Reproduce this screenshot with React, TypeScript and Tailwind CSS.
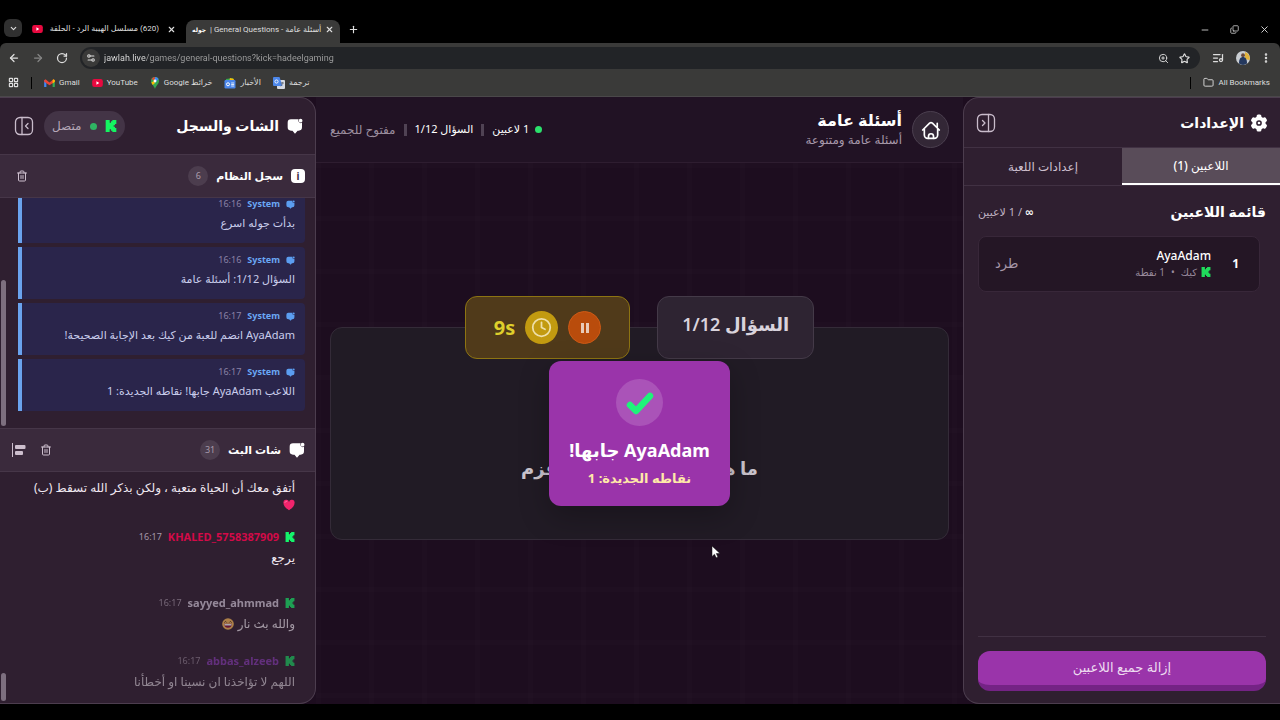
import type { ReactNode } from 'react';
import {
  ArrowLeft,
  ArrowRight,
  ChevronDown,
  Clock,
  Copy,
  EllipsisVertical,
  Folder,
  LayoutGrid,
  ListMusic,
  Minus,
  Plus,
  RotateCw,
  Settings2,
  Star,
  Trash2,
  X,
  ZoomIn,
} from 'lucide-react';

interface SystemMessage {
  time: string;
  text: string;
}

interface ChatMessage {
  user: string;
  time: string;
  color: string;
  className: string;
  body: ReactNode;
}

function KickLogo({ className }: { className?: string }) {
  return (
    <svg viewBox="1 0 22 24" fill="currentColor" className={className} aria-hidden="true">
      <path d="M1.333 0h8v5.333H12V2.667h2.667V0h8v8H20v2.667h-2.667v2.666H20V16h2.667v8h-8v-2.667H12v-2.666H9.333V24h-8Z" />
    </svg>
  );
}

function ChatIcon({ className }: { className?: string }) {
  return (
    <svg viewBox="0 0 24 24" fill="currentColor" className={className} aria-hidden="true">
      <path d="M6 2h11.400a3.800 3.800 0 0 0 5.100 5.200V14a5 5 0 0 1-5 5h-1.600L12 23.500 8.200 19H6a5 5 0 0 1-5-5V7a5 5 0 0 1 5-5Z" />
      <circle cx="20.400" cy="4" r="2.800" />
    </svg>
  );
}

function PanelIcon({ side }: { side: 'left' | 'right' }) {
  return (
    <svg
      viewBox="0 0 20 20"
      fill="none"
      stroke="currentColor"
      strokeWidth="1.3"
      strokeLinecap="round"
      strokeLinejoin="round"
      className="size-5"
      aria-hidden="true"
    >
      <rect x="1.5" y="1.5" width="17" height="17" rx="4.5" />
      {side === 'left' ? <path d="M8 1.5v17M14 7.5 11.5 10l2.5 2.5" /> : <path d="M12.5 1.5v17M6.5 7.5 9 10l-2.5 2.5" />}
    </svg>
  );
}

function GearIcon({ className }: { className?: string }) {
  return (
    <svg viewBox="0 0 24 24" className={className} aria-hidden="true">
      <g fill="currentColor">
        <circle cx="12" cy="12" r="8.8" />
        <rect x="8.8" y="0.800" width="6.4" height="22.400" rx="2" />
        <rect x="8.8" y="0.800" width="6.4" height="22.400" rx="2" transform="rotate(60 12 12)" />
        <rect x="8.8" y="0.800" width="6.4" height="22.400" rx="2" transform="rotate(120 12 12)" />
      </g>
      <circle cx="12" cy="12" r="2.800" fill="none" stroke="#2f1f30" strokeWidth="2" />
    </svg>
  );
}

function HomeIcon() {
  return (
    <svg
      viewBox="0 0 24 24"
      fill="none"
      stroke="currentColor"
      strokeWidth="2"
      strokeLinecap="round"
      strokeLinejoin="round"
      className="size-5"
      aria-hidden="true"
    >
      <path d="m2 12 8.3-8.2a2.5 2.5 0 0 1 3.4 0L22 12M4 10.5V18a4 4 0 0 0 4 4h8a4 4 0 0 0 4-4v-7.500M19.500 8.500V4" />
      <path d="M9 22v-2.500a3 3 0 0 1 6 0V22" />
    </svg>
  );
}

function YouTubeIcon() {
  return (
    <svg viewBox="0 0 12 9" className="h-2 w-[11px] shrink-0" aria-hidden="true">
      <rect width="12" height="9" rx="2.5" fill="#e8093f" />
      <path d="m4.800 2.600 3.200 1.900-3.200 1.900Z" fill="#fff" />
    </svg>
  );
}

function GmailIcon() {
  return (
    <svg viewBox="0 0 12 9" className="h-2 w-[11px]" aria-hidden="true">
      <path d="M0 1v8h2.500V3Z" fill="#4285f4" />
      <path d="M12 1v8H9.500V3Z" fill="#34a853" />
      <path d="M0 1.500 1.500.300 6 3.800 10.500.300 12 1.500v1.700L6 7 0 3.200Z" fill="#ea4335" />
      <path d="M9.500 1.200 10.500.300 12 1.500v1.700L9.500 5Z" fill="#fbbc04" />
    </svg>
  );
}

function MapsIcon() {
  return (
    <svg viewBox="0 0 10 12" className="h-3 w-2.5" aria-hidden="true">
      <path d="M5 0a4 4 0 0 0-4 4c0 3 3 4.500 4 8 1-3.500 4-5 4-8a4 4 0 0 0-4-4Z" fill="#34a853" />
      <path d="M5 0a4 4 0 0 1 3.500 2L5 6Z" fill="#4285f4" />
      <path d="M5 0a4 4 0 0 0-3.300 1.700L4 4Z" fill="#ea4335" />
      <path d="M1.300 5.500 4 4l1 2-2.300 2Z" fill="#fbbc04" />
      <circle cx="5" cy="4" r="1.400" fill="#fff" />
    </svg>
  );
}

function NewsIcon() {
  return (
    <svg viewBox="0 0 12 12" className="size-3" aria-hidden="true">
      <path d="m2 2 7-1 1 4H2Z" fill="#34a853" />
      <path d="m6 1 4 1-1 3H5Z" fill="#fbbc04" />
      <rect x=".500" y="3" width="11" height="8.500" rx="1.200" fill="#4b86ea" />
      <circle cx="4" cy="7.300" r="1.500" fill="none" stroke="#fff" />
      <path d="M7.200 6h3M7.200 7.500h3M7.200 9h3" stroke="#fff" strokeWidth=".800" />
    </svg>
  );
}

function TranslateIcon() {
  return (
    <svg viewBox="0 0 12 12" className="size-3" aria-hidden="true">
      <rect x="4" y="3" width="8" height="9" rx="1" fill="#d5d9e2" />
      <path d="M1 0h5.500l3 9H1a1 1 0 0 1-1-1V1a1 1 0 0 1 1-1Z" fill="#4b86ea" />
      <circle cx="3.500" cy="4.500" r="1.600" fill="none" stroke="#fff" strokeWidth=".900" />
      <path d="M7.500 6h3.500M9.300 5v1c0 1.500-.800 2.500-1.500 3.300" stroke="#5b6270" strokeWidth=".800" fill="none" />
    </svg>
  );
}

function Avatar() {
  return (
    <svg viewBox="0 0 14 14" className="size-3.5" aria-hidden="true">
      <circle cx="7" cy="7" r="7" fill="#c9cdd2" />
      <path d="M9 1a6.500 6.500 0 0 1 4.500 8L9 8Z" fill="#e2b33c" />
      <path d="M3 12.500C3 8 4.500 6 7 6s4 2 4 6.500a7 7 0 0 1-8 0Z" fill="#24385e" />
      <circle cx="7" cy="4.200" r="1.900" fill="#6b4a3a" />
    </svg>
  );
}

function HeartEmoji() {
  return (
    <svg viewBox="0 0 12 12" className="size-3" aria-label="قلب" role="img">
      <path d="M6 11.300C2 8.500.500 6.500.500 4.200A2.800 2.800 0 0 1 6 3a2.800 2.800 0 0 1 5.500 1.200c0 2.300-1.500 4.300-5.500 7.100Z" fill="#f0246c" />
      <path d="M2 3.500c.300-1 1-1.300 1.800-1.200" stroke="#ff8fb5" strokeWidth=".800" fill="none" strokeLinecap="round" />
    </svg>
  );
}

function LaughEmoji() {
  return (
    <svg viewBox="0 0 12 12" className="size-3" aria-label="ضحك" role="img">
      <circle cx="6" cy="6" r="5.800" fill="#ffbf58" />
      <path d="M2.300 4.600 3.600 3.400l1.200 1.200M7.200 4.600l1.200-1.200 1.300 1.200" stroke="#4b2f24" strokeWidth=".900" fill="none" />
      <path d="M2.200 5.800h7.600a3.800 4 0 0 1-7.600 0Z" fill="#8a1238" />
      <path d="M2.500 5.900h7v1.600h-7Z" fill="#fff" />
    </svg>
  );
}

const systemMessages: SystemMessage[] = [
  { time: '16:16', text: 'بدأت جوله اسرع' },
  { time: '16:16', text: 'السؤال 1/12: أسئلة عامة' },
  { time: '16:17', text: '\u200fAyaAdam انضم للعبة من كيك بعد الإجابة الصحيحة!' },
  { time: '16:17', text: 'اللاعب AyaAdam جابها! نقاطه الجديدة: 1' },
];

const chatMessages: ChatMessage[] = [
  { user: 'KHALED_5758387909', time: '16:17', color: 'text-[#d30a48]', className: 'mt-4', body: 'يرجع' },
  {
    user: 'sayyed_ahmmad',
    time: '16:17',
    color: 'text-[#d9cfe0]',
    className: 'mt-6 opacity-60',
    body: (
      <>
        والله بث نار <LaughEmoji />
      </>
    ),
  },
  {
    user: 'abbas_alzeeb',
    time: '16:17',
    color: 'text-[#9540c8]',
    className: 'mt-4 opacity-50',
    body: 'اللهم لا تؤاخذنا ان نسينا او أخطأنا',
  },
];

const bookmarks = [
  { label: 'Gmail', icon: <GmailIcon /> },
  { label: 'YouTube', icon: <YouTubeIcon /> },
  { label: 'خرائط Google', icon: <MapsIcon /> },
  { label: 'الأخبار', icon: <NewsIcon /> },
  { label: 'ترجمة', icon: <TranslateIcon /> },
];

function BrowserChrome() {
  return (
    <header className="shrink-0 bg-black font-['Roboto','DejaVu_Sans',sans-serif] text-[8px] text-[#dedede]">
      <div className="flex h-[43px] items-end pl-1">
        <button aria-label="Search tabs" className="mb-1.5 flex size-[18px] items-center justify-center rounded-md bg-[#303030]">
          <ChevronDown size={9} strokeWidth={3} />
        </button>
        <div className="flex h-7 w-[158px] items-center gap-1 pl-2.5">
          <YouTubeIcon />
          <span dir="rtl" className="flex-1 whitespace-nowrap">
            (620) مسلسل الهيبة الرد - الحلقة
          </span>
          <button aria-label="Close tab" className="px-1">
            <X size={9} strokeWidth={3} />
          </button>
        </div>
        <div className="ml-1.5 flex h-[23px] w-[154px] items-center gap-1 rounded-t-lg bg-[#3a3a39] pr-1.5 pb-1 pl-1.5">
          <span className="text-[6px] font-bold text-white">جوله</span>
          <span dir="rtl" className="flex-1 whitespace-nowrap">
            أسئلة عامة - General Questions |
          </span>
          <button aria-label="Close tab">
            <X size={9} strokeWidth={3} />
          </button>
        </div>
        <button aria-label="New tab" className="mb-2 ml-2">
          <Plus size={11} strokeWidth={2.5} />
        </button>
        <div className="mr-2.5 mb-2 ml-auto flex items-center gap-5">
          <button aria-label="Minimize">
            <Minus size={10} />
          </button>
          <button aria-label="Restore">
            <Copy size={9} className="-scale-x-100 rotate-180" />
          </button>
          <button aria-label="Close">
            <X size={11} />
          </button>
        </div>
      </div>
      <div className="rounded-t-md border-b border-[#4a484a] bg-[#3a3a39]">
        <div className="flex h-[30px] items-center pr-2 pl-2">
          <button aria-label="Back" className="mr-3">
            <ArrowLeft size={12} strokeWidth={2.5} />
          </button>
          <button aria-label="Forward" className="mr-3 text-[#858585]">
            <ArrowRight size={12} strokeWidth={2.5} />
          </button>
          <button aria-label="Reload" className="mr-3">
            <RotateCw size={12} strokeWidth={2.5} />
          </button>
          <div className="flex h-[22px] flex-1 items-center rounded-full bg-[#222427] px-0.5">
            <button aria-label="Site information" className="mr-1 flex size-[18px] items-center justify-center rounded-full bg-[#3a3a39]">
              <Settings2 size={10} strokeWidth={2.5} />
            </button>
            <input
              aria-label="Address"
              defaultValue="jawlah.live/games/general-questions?kick=hadeelgaming"
              className="h-4 flex-1 bg-[linear-gradient(to_right,#e3e3e3_42px,#a0a0a0_42px)] bg-clip-text text-[9px] text-transparent outline-none"
            />
            <button aria-label="Zoom" className="mr-2.5">
              <ZoomIn size={11} />
            </button>
            <button aria-label="Bookmark" className="mr-2">
              <Star size={11} strokeWidth={2.5} />
            </button>
          </div>
          <button aria-label="Media" className="ml-3">
            <ListMusic size={12} strokeWidth={2.5} />
          </button>
          <button aria-label="Profile" className="ml-3">
            <Avatar />
          </button>
          <button aria-label="Menu" className="ml-2.5">
            <EllipsisVertical size={12} strokeWidth={3} />
          </button>
        </div>
        <nav className="flex h-[23px] items-center gap-3 pb-1 pl-2">
          <button aria-label="Apps">
            <LayoutGrid size={11} strokeWidth={2.5} />
          </button>
          <span className="h-3 w-px bg-black" />
          {bookmarks.map((b) => (
            <a key={b.label} href="#" className="flex items-center gap-1">
              {b.icon}
              <span dir="auto">{b.label}</span>
            </a>
          ))}
          <span className="ml-auto h-3 w-px bg-black" />
          <a href="#" className="flex items-center gap-1 pr-2.5">
            <Folder size={11} />
            All Bookmarks
          </a>
        </nav>
      </div>
    </header>
  );
}

function SettingsPanel() {
  return (
    <aside className="flex w-[317px] shrink-0 flex-col rounded-l-2xl border border-r-0 border-[#4c3d4e] bg-[#2f1f30]">
      <div className="flex h-[50px] items-center justify-between border-b border-[#413143] pr-3 pl-3">
        <h2 className="flex items-center gap-1.5 text-sm font-bold">
          <GearIcon className="size-[18px]" />
          الإعدادات
        </h2>
        <button aria-label="طي الإعدادات" className="text-[#c9bccb]">
          <PanelIcon side="right" />
        </button>
      </div>
      <div className="flex h-[38px] border-b border-[#413143] text-xs">
        <button className="flex-1 border-b-2 border-white bg-[#594c59] font-medium">اللاعبين (1)</button>
        <button className="flex-1 text-[#cdbfce]">إعدادات اللعبة</button>
      </div>
      <div className="flex flex-1 flex-col px-3.5 pt-3.5">
        <div className="flex h-6 items-center justify-between">
          <h3 className="text-sm font-bold">قائمة اللاعبين</h3>
          <span className="text-[11px] text-[#bfb1c1]">
            <b className="text-white">∞</b> / 1 لاعبين
          </span>
        </div>
        <div className="mt-3 mr-1.5 flex h-14 items-center rounded-lg border border-[#382739] bg-[#241625] pr-5 pl-4">
          <span className="w-7 text-xs font-bold">1</span>
          <div>
            <div className="text-xs leading-4 font-medium">AyaAdam</div>
            <div className="flex items-center gap-1 text-[10px] leading-4 text-[#9a8b9d]">
              <KickLogo className="size-2.5 text-[#1fdc5b]" />
              كيك <span className="px-0.5">•</span> 1 نقطة
            </div>
          </div>
          <button className="mr-auto text-[13px] text-[#a898aa]">طرد</button>
        </div>
        <div className="mt-auto border-t border-[#413143] pt-3.5 pb-3">
          <button className="flex h-10 w-full items-center justify-center rounded-xl border-b-6 border-[#742385] bg-[#9a34aa] text-[13px] text-[#eddcf0]">
            إزالة جميع اللاعبين
          </button>
        </div>
      </div>
    </aside>
  );
}

function GameArea() {
  return (
    <main className="flex min-w-0 flex-1 flex-col">
      <div className="flex h-[66px] items-center justify-between border-b border-[#2e1d30] bg-[#211224] px-3.5">
        <div className="flex items-center gap-2.5">
          <button
            aria-label="الرئيسية"
            className="flex size-[37px] items-center justify-center rounded-full border border-[#4b3f4f] bg-[#332736]"
          >
            <HomeIcon />
          </button>
          <div>
            <h1 className="text-base leading-5 font-bold">أسئلة عامة</h1>
            <p className="text-xs leading-5 text-[#a899ab]">أسئلة عامة ومتنوعة</p>
          </div>
        </div>
        <div className="flex items-center gap-2 text-[11px]">
          <span className="flex items-center gap-1.5">
            <i className="size-[7px] rounded-full bg-[#2be06c]" />
            <span>1 لاعبين</span>
          </span>
          <span className="h-3 w-[3px] bg-[#504354]" />
          <span>السؤال 1/12</span>
          <span className="h-3 w-[3px] bg-[#504354]" />
          <span className="text-xs text-[#9c8e9f]">مفتوح للجميع</span>
        </div>
      </div>
      <div className="flex flex-1 flex-col justify-center bg-[linear-gradient(to_right,#ffffff02_5px,transparent_5px),linear-gradient(to_bottom,#ffffff02_5px,transparent_5px)] bg-size-[53px_53px] px-3.5">
        <section className="relative h-[213px] rounded-xl border border-[#342b38] bg-[#211b25]">
          <div className="absolute inset-x-0 -top-8 flex items-stretch justify-center gap-[27px]">
            <div className="flex h-[63px] items-center rounded-xl border border-[#443a48] bg-[#2e2432] px-6 pb-2 text-lg font-semibold text-[#d9d3dc]">
              السؤال 1/12
            </div>
            <div className="flex h-[63px] items-center gap-2.5 rounded-xl border border-[#8d7412] bg-[#503a1a] px-7">
              <button
                aria-label="إيقاف مؤقت"
                className="flex size-[33px] items-center justify-center gap-0.5 rounded-full border border-[#cf5a16] bg-[#b94c0c]"
              >
                <span className="h-2.5 w-[3px] bg-[#e8cbb8]" />
                <span className="h-2.5 w-[3px] bg-[#e8cbb8]" />
              </button>
              <span className="flex size-[33px] items-center justify-center rounded-full bg-[#c29a10] text-[#eedfa8]">
                <Clock size={21} />
              </span>
              <span className="text-xl font-bold text-[#dfcf2c]">9s</span>
            </div>
          </div>
          <p className="flex justify-between px-[190px] pt-[126px] text-lg leading-7 font-bold text-[#cbc5ce]">
            <span>ما هو</span>
            <span>قزم</span>
          </p>
          <div className="absolute inset-0 flex items-center justify-center">
            <div
              role="status"
              className="flex h-[145px] w-[181px] flex-col items-center rounded-xl bg-[#9a34aa] pt-[18px] shadow-[0_10px_30px_rgba(0,0,0,0.25)]"
            >
              <span className="flex size-[47px] items-center justify-center rounded-full bg-[#aa53b8]">
                <svg viewBox="0 0 28 24" className="h-6 w-7" fill="none" aria-hidden="true">
                  <path d="m4 14 6 6L24 5" stroke="#1ff37a" strokeWidth="6.500" strokeLinecap="round" strokeLinejoin="round" />
                </svg>
              </span>
              <strong className="mt-2.5 text-lg leading-7 whitespace-nowrap">{'\u200fAyaAdam جابها!'}</strong>
              <span className="text-[13px] leading-7 font-bold whitespace-nowrap text-[#ffe9a8]">نقاطه الجديدة: 1</span>
            </div>
          </div>
        </section>
      </div>
    </main>
  );
}

interface SectionHeaderProps {
  icon: ReactNode;
  title: string;
  count: number;
  children: ReactNode;
}

function SectionHeader({ icon, title, count, children }: SectionHeaderProps) {
  return (
    <div className="flex h-11 shrink-0 items-center gap-2 border-y border-[#463648] bg-[#3a2a3c] pr-2.5 pl-3">
      {icon}
      <h3 className="text-[11px] font-bold">{title}</h3>
      <span className="flex h-5 min-w-5 items-center justify-center rounded-full bg-[#4c3d4e] px-1 text-[9px] text-[#a99bab]">
        {count}
      </span>
      <div className="mr-auto flex items-center gap-3.5 text-[#cdbfce]">{children}</div>
    </div>
  );
}

function ChatPanel() {
  return (
    <aside className="flex w-[316px] shrink-0 flex-col overflow-hidden rounded-r-2xl border border-l-0 border-[#4c3d4e] bg-[#2f1f30]">
      <div className="flex h-14 shrink-0 items-center pr-3 pl-3.5">
        <h2 className="flex items-center gap-2 text-sm font-bold">
          <ChatIcon className="size-4" />
          الشات والسجل
        </h2>
        <span className="mr-auto flex h-[30px] items-center gap-2 rounded-full bg-[#433446] px-2 text-xs text-[#b6a8b8]">
          <KickLogo className="size-3 text-[#14f561]" />
          <i className="size-[7px] rounded-full bg-[#2fb463]" />
          متصل
        </span>
        <button aria-label="طي الشات" className="mr-2.5 text-[#c9bccb]">
          <PanelIcon side="left" />
        </button>
      </div>

      <SectionHeader
        icon={
          <span className="flex size-3.5 items-center justify-center rounded-sm bg-white text-[10px] font-bold text-[#3a2a3c]">i</span>
        }
        title="سجل النظام"
        count={6}
      >
        <button aria-label="مسح السجل" className="ml-1">
          <Trash2 size={12} />
        </button>
      </SectionHeader>
      <div className="relative flex min-h-0 flex-1 flex-col justify-end gap-1 overflow-hidden pr-2.5 pb-[17px] pl-[18px]">
        {systemMessages.map((m) => (
          <article
            key={m.text}
            className="h-[52px] shrink-0 rounded-r border-l-4 border-[#6aa3ee] bg-[#2a254b] pt-1 pr-2.5"
          >
            <div className="flex h-[18px] items-center gap-1.5 text-[9px]">
              <ChatIcon className="size-[9px] text-[#5b9df0]" />
              <b className="text-[#6aa8f5]">System</b>
              <time className="text-[#8a83a6]">{m.time}</time>
            </div>
            <p className="text-[11px] leading-5 whitespace-nowrap text-[#c9cdec]">{m.text}</p>
          </article>
        ))}
        <span className="absolute bottom-0.5 left-px h-[146px] w-[5px] rounded-full bg-[#7d6f7f]" />
      </div>

      <SectionHeader icon={<ChatIcon className="size-4" />} title="شات البث" count={31}>
        <button aria-label="مسح الشات">
          <Trash2 size={12} />
        </button>
        <button aria-label="محاذاة">
          <svg viewBox="0 0 14 14" className="size-3.5" fill="currentColor" aria-hidden="true">
            <path d="M0 0h1v14H0Z" />
            <rect x="3" y="2" width="10.500" height="4" rx="1" />
            <rect x="3" y="8" width="8" height="4" rx="1" />
          </svg>
        </button>
      </SectionHeader>
      <div className="relative flex min-h-0 flex-1 flex-col justify-end overflow-hidden pt-2 pr-5 pb-2.5 pl-2 text-xs">
        <p className="leading-[22px] whitespace-nowrap text-[#efe8f0]">
          أتفق معك أن الحياة متعبة ، ولكن بذكر الله تسقط (ب)
        </p>
        <div className="flex h-5 items-center">
          <HeartEmoji />
        </div>
        {chatMessages.map((m) => (
          <article key={m.user} className={m.className}>
            <div className="flex h-5 items-center gap-1.5 text-[11px]">
              <KickLogo className="size-2.5 text-[#14f56b]" />
              <b className={m.color}>{m.user}</b>
              <time className="text-[9px] text-[#a698a8]">{m.time}</time>
            </div>
            <p className="flex items-center gap-1 leading-[22px] text-[#efe8f0]">{m.body}</p>
          </article>
        ))}
        <span className="absolute bottom-0.5 left-px h-7 w-[5px] rounded-full bg-[#7d6f7f]" />
      </div>
    </aside>
  );
}

export default function App() {
  return (
    <div className="flex h-screen flex-col overflow-hidden bg-black">
      <BrowserChrome />
      <div
        dir="rtl"
        className="flex min-h-0 flex-1 bg-[#1d0d1f] font-['Noto_Sans','DejaVu_Sans',sans-serif] text-white"
      >
        <SettingsPanel />
        <GameArea />
        <ChatPanel />
      </div>
      <footer className="h-4 shrink-0 bg-black" />
      {/* Mouse pointer */}
      <svg viewBox="0 0 10 14" className="pointer-events-none absolute top-[545px] left-[711px] h-3.5 w-2.5" aria-hidden="true">
        <path d="M1 1v10.500l2.500-2.300 1.700 3.600 1.700-.800-1.600-3.500H9Z" fill="#fff" stroke="#111" strokeWidth=".500" />
      </svg>
    </div>
  );
}
